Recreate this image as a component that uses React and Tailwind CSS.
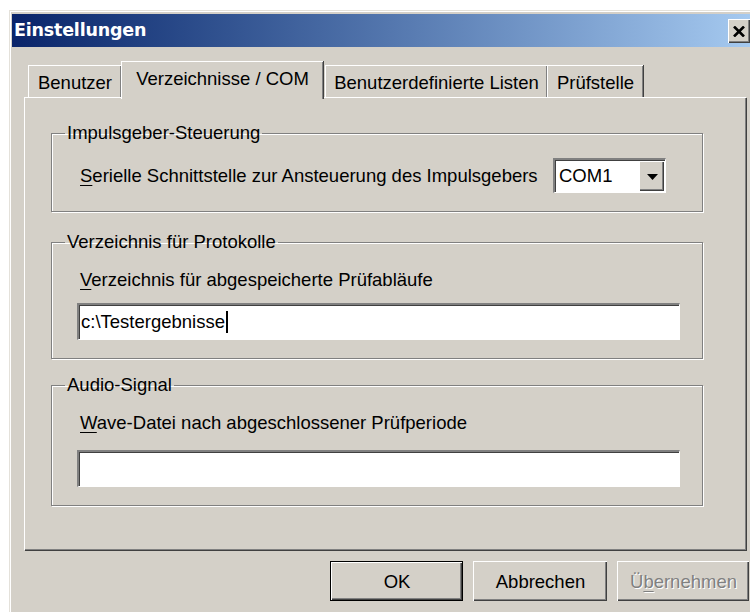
import React from 'react';

const face = { fontFamily: '"Liberation Sans", Arial, sans-serif' };

function Mnemonic({ text, at }) {
  // Windows-style accelerator: one underlined letter
  return (
    <>
      {text.slice(0, at)}
      <span className="underline underline-offset-[3px]">{text[at]}</span>
      {text.slice(at + 1)}
    </>
  );
}

function Tab({ label, active, width }) {
  if (active) {
    return (
      <div
        className={`relative z-10 -mb-[2px] flex h-[38px] items-start justify-center border-l border-t border-white bg-[#d4d0c8] pt-[6px] shadow-[inset_-1px_0_0_#808080,1px_0_0_#404040] ${width}`}
      >
        <span className="text-[18.5px] leading-[22px] text-black">{label}</span>
      </div>
    );
  }
  return (
    <div
      className={`flex h-[32px] items-start justify-center border-l border-t border-white bg-[#d4d0c8] pt-[6px] shadow-[inset_-1px_0_0_#808080,1px_0_0_#404040] ${width}`}
    >
      <span className="text-[18.5px] leading-[22px] text-black">{label}</span>
    </div>
  );
}

function GroupBox({ title, className, children }) {
  return (
    <fieldset
      className={`w-[652px] border border-[#808080] shadow-[inset_1px_1px_0_#fff,1px_1px_0_#fff] ${className}`}
    >
      <legend className="ml-[13px] px-[2px] text-[18.5px] leading-[20px] text-black">{title}</legend>
      {children}
    </fieldset>
  );
}

function TextBox({ value, caret }) {
  return (
    <div className="flex h-[37px] w-[603px] items-center border-l-2 border-t-2 border-[#808080] border-b border-r border-b-white border-r-white bg-white shadow-[inset_1px_1px_0_#404040] pl-[2px]">
      <span className="text-[18.5px] leading-[20px] text-black">{value}</span>
      {caret && <span className="ml-[1px] inline-block h-[22px] w-[2px] bg-black" />}
    </div>
  );
}

function ComboBox() {
  return (
    <div className="flex h-[35px] w-[113px] items-stretch border-l-2 border-t-2 border-[#808080] border-b border-r border-b-white border-r-white bg-white shadow-[inset_1px_1px_0_#404040]">
      <div className="flex flex-1 items-center pl-[4px] text-[18.5px] leading-[20px] text-black">COM1</div>
      <div className="m-[1px] flex w-[25px] items-center justify-center border-l border-t border-white bg-[#d4d0c8] shadow-[inset_-1px_-1px_0_#404040,inset_-2px_-2px_0_#808080]">
        <svg width="11" height="6" viewBox="0 0 11 6">
          <path d="M0 0h11L5.5 6z" fill="#000" />
        </svg>
      </div>
    </div>
  );
}

function Button({ children, primary, disabled, width }) {
  return (
    <div
      className={`flex h-[40px] items-center justify-center bg-[#d4d0c8] text-[18.5px] ${
        primary ? 'border border-black' : ''
      } ${width}`}
    >
      <div className="flex h-full w-full items-center justify-center border-l border-t border-white shadow-[inset_-1px_-1px_0_#404040,inset_-2px_-2px_0_#808080]">
        <span
          className={
            disabled ? 'text-[#808080] [text-shadow:1px_1px_0_#fff]' : 'text-black'
          }
        >
          {children}
        </span>
      </div>
    </div>
  );
}

export default function App() {
  return (
    <div className="h-[612px] w-[750px] overflow-hidden bg-white pl-[9px] pt-[10px]" style={face}>
      <div className="h-[620px] w-[760px] border-l border-t border-[#e4e1da] bg-[#d4d0c8]">
        <div className="h-full w-full border-l border-t border-white pl-[1px] pt-[2px]">
          {/* title bar */}
          <div className="flex h-[33px] w-[740px] items-center justify-between bg-gradient-to-r from-[#0a246a] to-[#a6caf0] pl-[2px] pr-[2px]">
            <span
              className="text-[17.5px] font-bold leading-none text-white"
              style={{ fontFamily: '"DejaVu Sans", Verdana, sans-serif', letterSpacing: '-0.2px' }}
            >
              Einstellungen
            </span>
            <div className="flex h-[24px] w-[22px] items-center justify-center border-l border-t border-white bg-[#d4d0c8] shadow-[inset_-1px_-1px_0_#404040,inset_-2px_-2px_0_#808080]">
              <svg width="12" height="11" viewBox="0 0 12 11" className="-ml-[1px]">
                <path d="M1 0.5l10 10M11 0.5l-10 10" stroke="#000" strokeWidth="2.6" />
              </svg>
            </div>
          </div>

          {/* tabs */}
          <div className="mt-[14px] flex h-[36px] items-end pl-[16px]">
            <Tab label="Benutzer" width="w-[93px]" />
            <Tab label="Verzeichnisse / COM" width="w-[202px]" active />
            <div className="w-[2px]" />
            <Tab label="Benutzerdefinierte Listen" width="w-[222px]" />
            <Tab label="Prüfstelle" width="w-[96px]" />
          </div>

          {/* tab page */}
          <div className="ml-[12px] h-[453px] w-[722px] border-l border-t border-white shadow-[inset_-1px_-1px_0_#808080,1px_1px_0_#404040] pl-[26px] pt-[25px]">
            <GroupBox title="Impulsgeber-Steuerung" className="h-[89px]">
              <div className="flex items-center pl-[28px] pt-[15px]">
                <span className="w-[473px] text-[18.5px] leading-[20px] text-black">
                  <Mnemonic text="Serielle Schnittstelle zur Ansteuerung des Impulsgebers" at={0} />
                </span>
                <ComboBox />
              </div>
            </GroupBox>

            <GroupBox title="Verzeichnis für Protokolle" className="mt-[20px] h-[127px]">
              <div className="pl-[25px] pt-[18px]">
                <div className="pl-[3px] text-[18.5px] leading-[20px] text-black">
                  <Mnemonic text="Verzeichnis für abgespeicherte Prüfabläufe" at={0} />
                </div>
                <div className="mt-[13px]">
                  <TextBox value="c:\Testergebnisse" caret />
                </div>
              </div>
            </GroupBox>

            <GroupBox title="Audio-Signal" className="mt-[16px] h-[131px]">
              <div className="pl-[25px] pt-[18px]">
                <div className="pl-[3px] text-[18.5px] leading-[20px] text-black">
                  <Mnemonic text="Wave-Datei nach abgeschlossener Prüfperiode" at={0} />
                </div>
                <div className="mt-[17px]">
                  <TextBox value="" />
                </div>
              </div>
            </GroupBox>
          </div>

          {/* dialog buttons */}
          <div className="mt-[11px] flex gap-[10px] pl-[318px]">
            <Button primary width="w-[133px]">OK</Button>
            <Button width="w-[134px]">Abbrechen</Button>
            <Button disabled width="w-[132px]">
              <Mnemonic text="Übernehmen" at={1} />
            </Button>
          </div>
        </div>
      </div>
    </div>
  );
}
